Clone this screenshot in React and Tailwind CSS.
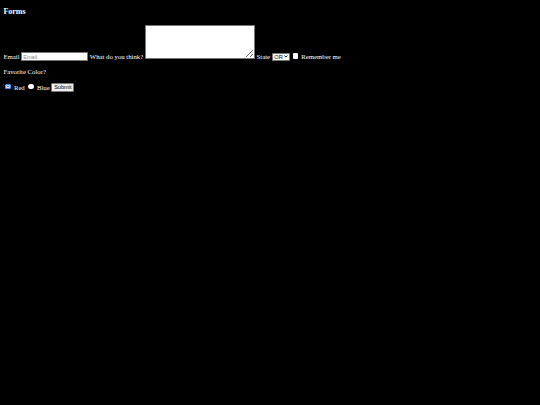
export default function App() {
    return (
        <div className="min-h-[405px] bg-black text-white px-[3.4px] pt-[1px] font-['Liberation_Serif',serif] text-[6.75px] leading-[7.8px]">
            <h3 className="mt-[5.9px] mb-[7.9px] text-[8px] leading-[9.1px] font-bold">Forms</h3>
            <form>
                <div>
                    <label htmlFor="email">Email</label>{' '}
                    <input
                        id="email"
                        type="email"
                        placeholder="Email"
                        className="inline-block w-[67px] h-[9px] bg-white border border-[#767676] px-[1px] text-[5.6px] leading-[6px] text-black placeholder:text-[#8a8a8a] font-['Liberation_Sans',sans-serif] align-baseline"
                    />{' '}
                    <label htmlFor="msg">What do you think?</label>{' '}
                    <textarea
                        id="msg"
                        className="inline-block w-[110px] h-[34px] mt-[1px] bg-white border border-[#767676] align-baseline resize-y"
                    ></textarea>{' '}
                    <label htmlFor="state">State</label>{' '}
                    <span className="relative inline-block align-baseline">
                        <select
                            id="state"
                            defaultValue="OR"
                            className="appearance-none block w-[18px] h-[8px] pl-[1.5px] bg-white text-black border border-[#767676] rounded-[1px] text-[5.6px] leading-[6px] font-['Liberation_Sans',sans-serif]"
                        >
                            <option value="OR">OR</option>
                            <option value="WA">WA</option>
                        </select>
                        <svg className="absolute right-[2px] top-[2.5px] pointer-events-none" width="4" height="3" viewBox="0 0 8 6" fill="none" stroke="black" strokeWidth="1.8">
                            <path d="M1 1l3 3.2L7 1" />
                        </svg>
                    </span>
                    <input
                        id="remember"
                        type="checkbox"
                        className="appearance-none inline-block w-[5.5px] h-[5.5px] ml-[3px] mr-[1.3px] bg-white rounded-[1px] align-baseline"
                    />{' '}
                    <label htmlFor="remember">Remember me</label>
                </div>
                <p className="my-[6.75px]">Favorite Color?</p>
                <div>
                    <input
                        id="red"
                        type="radio"
                        name="color"
                        defaultChecked
                        className="appearance-none inline-block w-[5.5px] h-[5.5px] ml-[2px] mr-[1.3px] rounded-full bg-white checked:bg-[#2f7ff0] checked:shadow-[inset_0_0_0_1px_#2f7ff0,inset_0_0_0_1.8px_#ffffff] align-baseline"
                    />{' '}
                    <label htmlFor="red">Red</label>{' '}
                    <input
                        id="blue"
                        type="radio"
                        name="color"
                        className="appearance-none inline-block w-[5.5px] h-[5.5px] ml-[2px] mr-[1.3px] rounded-full bg-white checked:bg-[#2f7ff0] checked:shadow-[inset_0_0_0_1px_#2f7ff0,inset_0_0_0_1.8px_#ffffff] align-baseline"
                    />{' '}
                    <label htmlFor="blue">Blue</label>{' '}
                    <button
                        type="submit"
                        className="inline-block w-[23px] h-[9px] bg-[#efefef] text-black border border-[#767676] rounded-[1px] text-[5.6px] leading-[6px] font-['Liberation_Sans',sans-serif] align-baseline"
                    >
                        Submit
                    </button>
                </div>
            </form>
        </div>
    )
}
